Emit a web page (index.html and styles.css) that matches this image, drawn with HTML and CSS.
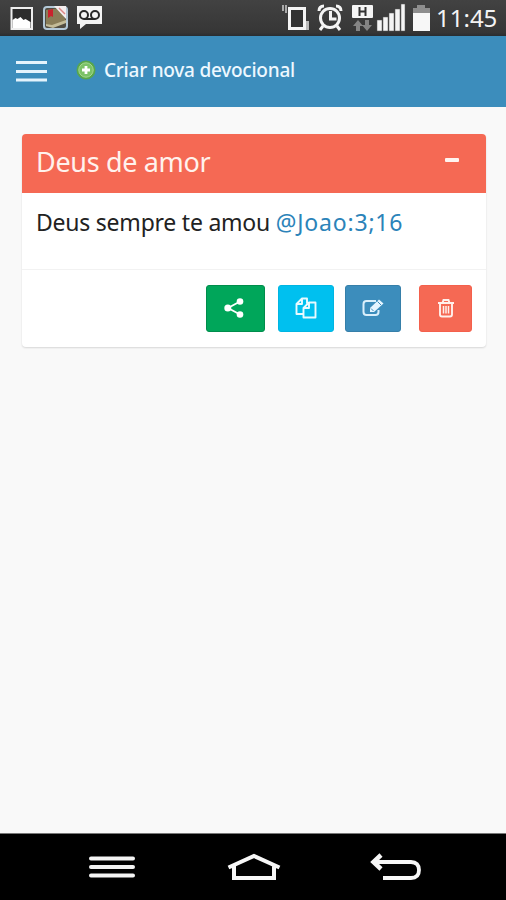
FILE: index.html
```html
<!DOCTYPE html>
<html lang="pt">
<head>
<meta charset="utf-8">
<title>Devocional</title>
<link rel="stylesheet" href="styles.css">
</head>
<body>
<div class="status">
  <svg class="notifications" width="110" height="35" viewBox="0 0 110 35">
    <rect x="11.500" y="8" width="20.500" height="21" fill="#2d2d2d" stroke="#eee" stroke-width="2"/>
    <path d="M12.500 20l3-2 2 1 3-2 3 3 2-1 5 3v6h-18z" fill="#fff"/>
    <rect x="44" y="7" width="23" height="22" rx="3" fill="#514d42" stroke="#b3c8d7" stroke-width="2"/>
    <path d="M46 10l14-2 6 13-14 5-6-2z" fill="#897d58"/>
    <path d="M46 24l6 1 14-5v3l-13 5-7-2z" fill="#c4bc98"/>
    <path d="M48 10l5-1v8l-2-1-3 2z" fill="#c9232d"/>
    <path d="M54 6h12v13z" fill="#f5eeee"/>
    <path d="M59 8l6 6" stroke="#d88" stroke-width="1.500"/>
    <path d="M77 6h25v18H86l-6 5v-5h-3z" fill="#f4f4f4"/>
    <g fill="none" stroke="#292929" stroke-width="2"><circle cx="84" cy="15" r="4"/><circle cx="95" cy="15" r="4"/><path d="M84 19h11"/></g>
  </svg>
  <svg class="indicators" width="154" height="35" viewBox="280 0 154 35">
    <rect x="289.500" y="8.500" width="15" height="20" fill="#333" stroke="#f5f5f5" stroke-width="3"/>
    <path d="M283 5v6M286 5v8" stroke="#aaa" stroke-width="2"/><path d="M307.500 21v9" stroke="#bbb" stroke-width="3"/>
    <g fill="none" stroke="#f5f5f5" stroke-width="3"><circle cx="330" cy="18" r="9.500"/><path d="M330.500 11v8h6M319 11q0-5 5-5M341 11q0-5-5-5M323 26l-3 4M337 26l3 4"/></g>
    <rect x="352" y="5" width="21" height="13" rx="1" fill="#f5f5f5"/>
    <path d="M359.500 7v9M365.500 7v9M359.500 11.500h6" stroke="#333" stroke-width="2"/>
    <path d="M358 20l5 6h-3v5h-4v-5h-3zM367 31l-5-6h3v-5h4v5h3z" fill="#858585"/>
    <path d="M377 20h5v11h-5zM383 17h5v14h-5zM389 13h5v18h-5zM395 9h5v22h-5zM401 4h4v27h-4z" fill="#f5f5f5" stroke="#555" stroke-width=".5"/>
    <path d="M413 8h4V5h8v3h5v5h-17z" fill="#8d8d8d"/><path d="M413 13h17v18h-17z" fill="#f7f7f7"/>
  </svg>
  <span class="clock">11:45</span>
</div>
<header class="topbar">
  <svg class="menu" width="32" height="22" viewBox="0 0 32 22"><path d="M0 1.500h31M0 10.500h31M0 19h31" stroke="#e4f3fc" stroke-width="3"/></svg>
  <svg class="add" width="20" height="20" viewBox="0 0 20 20"><circle cx="10" cy="10" r="9.500" fill="#58a74b"/><circle cx="10" cy="10" r="7.200" fill="#7bc267" stroke="#a6d891"/><path d="M10 6v8M6 10h8" stroke="#fff" stroke-width="2.800"/></svg>
  <span class="create">Criar nova devocional</span>
</header>
<main>
  <article class="card">
    <div class="card-head"><h1>Deus de amor</h1><span class="minus"></span></div>
    <p class="card-body">Deus sempre te amou <a>@Joao:3;16</a></p>
    <div class="actions">
      <span class="btn share"><svg width="20" height="20" viewBox="0 0 20 20"><path d="M16 3.500L4 10l12 6.500" fill="none" stroke="#fff" stroke-width="1.800"/><g fill="#fff"><circle cx="16" cy="3.500" r="3.300"/><circle cx="3.800" cy="10" r="3.500"/><circle cx="16" cy="16.500" r="3.300"/></g></svg></span>
      <span class="btn copy"><svg width="22" height="22" viewBox="0 0 22 22"><g fill="none" stroke="#e9faff" stroke-width="1.900" stroke-linejoin="round"><path d="M8 17H1.500V7L7 1.500h5v5M1.500 7H7V1.500M14 5.500h6.500v15H8.500v-9.500zM8.500 11H14V5.500"/></g></svg></span>
      <span class="btn edit"><svg width="22" height="20" viewBox="0 0 22 20"><path d="M14 3H4.500Q1.500 3 1.500 6v8q0 3 3 3h9q3 0 3-3v-2" fill="none" stroke="#d9effb" stroke-width="2"/><path d="M8 10l9-8.500 4.500 4-9.500 8.500H8z" fill="#e5f5ff"/><path d="M9 10.500l2.500 2.500M15.500 3.500L19 7" stroke="#3c8dbc"/></svg></span>
      <span class="btn delete"><svg width="18" height="20" viewBox="0 0 18 20"><g fill="none" stroke="#fff0ec" stroke-width="1.900"><path d="M1 5h16M5.500 5l1-3h5l1 3M3 5v11.500q0 2 2 2h8q2 0 2-2V5"/><path d="M6.500 8v7.500M9 8v7.500M11.500 8v7.500" stroke-width="1.500"/></g></svg></span>
    </div>
  </article>
</main>
<nav class="navbar">
  <svg width="46" height="24" viewBox="0 0 46 24"><path d="M2 3.500h42M2 12h42M2 20.500h42" stroke="#f4f4f4" stroke-width="4" stroke-linecap="round"/></svg>
  <svg class="home" width="54" height="28" viewBox="0 0 54 28"><path d="M1.500 14.500L27 3l25.500 11.500M7 12v13h40V12" fill="none" stroke="#f7f7f7" stroke-width="4"/></svg>
  <svg width="52" height="28" viewBox="0 0 52 28"><path d="M13 25h28q8 0 8-8t-8-8H4" fill="none" stroke="#f7f7f7" stroke-width="3.800"/><path d="M11 2L3.500 9l7.500 7" fill="none" stroke="#f7f7f7" stroke-width="4.500"/></svg>
</nav>
</body>
</html>
```
FILE: styles.css
```css
* { box-sizing: border-box; }
body {
  margin: 0;
  height: 900px;
  display: flex;
  flex-direction: column;
  background: #f9f9f9;
  font-family: "Noto Sans", sans-serif;
  overflow: hidden;
}
svg { display: block; flex: none; }
.status {
  height: 36px;
  display: flex;
  background: linear-gradient(#424242, #363636 90%, #292d30);
}
.indicators { margin-left: 170px; }
.clock {
  margin-left: 2px;
  color: #f4f4f4;
  font-size: 24px;
  line-height: 36px;
  white-space: nowrap;
}
.topbar {
  height: 71px;
  display: flex;
  align-items: center;
  padding: 0 0 3px 16px;
  background: #3c8dbc;
}
.menu { margin-top: 3px; }
.add { margin-left: 28px; }
.create {
  margin-left: 8px;
  color: #edf8ff;
  font-size: 19px;
  font-weight: 500;
  line-height: 26px;
  letter-spacing: -.24px;
  white-space: nowrap;
}
main { flex: 1; padding: 27px 20px 0 22px; }
.card {
  height: 213px;
  background: #fff;
  border-radius: 4px;
  box-shadow: 0 1px 2px rgba(0, 0, 0, .14);
}
.card-head {
  height: 59px;
  display: flex;
  justify-content: space-between;
  padding: 0 27px 0 14px;
  background: #f56954;
  border-radius: 4px 4px 0 0;
}
h1 {
  margin: 0;
  color: #fff2ed;
  font-size: 27px;
  font-weight: 400;
  line-height: 56px;
  letter-spacing: -.33px;
  white-space: nowrap;
}
.minus {
  width: 14px;
  height: 4px;
  margin-top: 24px;
  border-radius: 1px;
  background: #fff4f0;
}
.card-body {
  height: 77px;
  margin: 0;
  padding: 14px;
  color: #222;
  font-size: 23px;
  line-height: 31px;
  letter-spacing: -.23px;
  border-bottom: 1px solid #f2f2f2;
  white-space: nowrap;
}
.card-body a { color: #2b83b9; letter-spacing: .8px; }
.actions { display: flex; justify-content: flex-end; padding: 15px 14px 0; }
.btn {
  height: 47px;
  width: 56px;
  display: flex;
  justify-content: center;
  align-items: center;
  border-radius: 3px;
}
.btn svg { margin-bottom: 2px; }
.share { width: 59px; margin-right: 13px; padding-right: 4px; background: #00a65a; border: 1px solid #008d4c; }
.copy { margin-right: 11px; background: #00c0ef; border: 1px solid #00b5e2; }
.edit { margin-right: 18px; background: #3c8dbc; border: 1px solid #367fa9; }
.delete { width: 53px; background: #f56954; border: 1px solid #f4604c; }
.navbar {
  height: 67px;
  display: flex;
  align-items: center;
  padding-left: 89px;
  background: #000;
  border-top: 1px solid #777;
}
.home { margin: 0 89px 0 92px; }
```
